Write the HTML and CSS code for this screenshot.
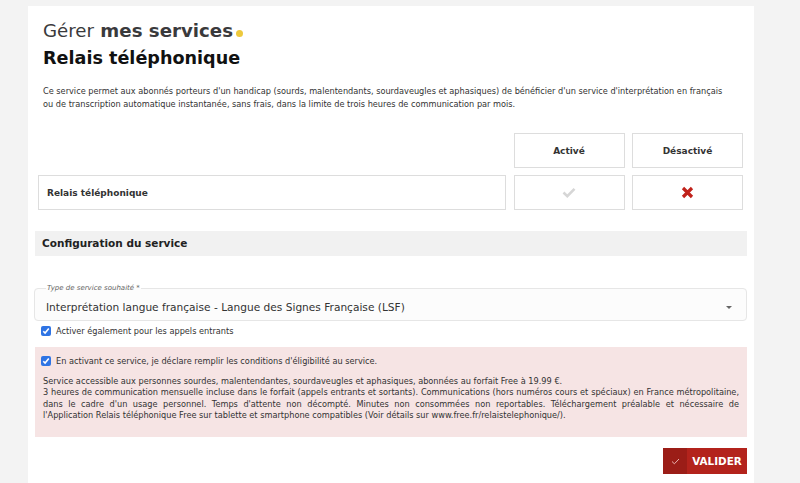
FILE: index.html
```html
<!DOCTYPE html>
<html lang="fr">
<head>
    <meta charset="UTF-8">
    <meta name="viewport" content="width=device-width, initial-scale=1.0">
    <title>Gérer mes services - Relais téléphonique</title>
    <link rel="stylesheet" href="styles.css">
</head>
<body>
    <div class="card">
        <h1 class="page-title"><span class="light">Gérer</span> mes services<span class="dot"></span></h1>
        <h2 class="service-title">Relais téléphonique</h2>
        <p class="intro">Ce service permet aux abonnés porteurs d'un handicap (sourds, malentendants, sourdaveugles et aphasiques) de bénéficier d'un service d'interprétation en français ou de transcription automatique instantanée, sans frais, dans la limite de trois heures de communication par mois.</p>

        <div class="status-grid">
            <div></div>
            <div class="cell head">Activé</div>
            <div class="cell head">Désactivé</div>
            <div class="cell name">Relais téléphonique</div>
            <div class="cell">
                <svg width="14" height="11" viewBox="0 0 14 11"><path d="M1.5 5.5l3.8 3.6L12.5 1.8" fill="none" stroke="#d6d6d6" stroke-width="2.6"/></svg>
            </div>
            <div class="cell">
                <svg width="13" height="13" viewBox="0 0 13 13"><path d="M2 2l9 9M11 2l-9 9" stroke="#c0221b" stroke-width="3.2"/></svg>
            </div>
        </div>

        <div class="section-head">Configuration du service</div>

        <fieldset class="field">
            <legend>Type de service souhaité *</legend>
            <div class="select-value">
                <span>Interprétation langue française - Langue des Signes Française (LSF)</span>
                <span class="caret"></span>
            </div>
        </fieldset>

        <label class="check">
            <span class="box"><svg width="8" height="8" viewBox="0 0 8 8"><path d="M1.3 4.2l1.8 1.9L6.8 1.6" fill="none" stroke="#fff" stroke-width="1.6"/></svg></span>
            Activer également pour les appels entrants
        </label>

        <div class="notice">
            <label class="check">
                <span class="box"><svg width="8" height="8" viewBox="0 0 8 8"><path d="M1.3 4.2l1.8 1.9L6.8 1.6" fill="none" stroke="#fff" stroke-width="1.6"/></svg></span>
                En activant ce service, je déclare remplir les conditions d'éligibilité au service.
            </label>
            <p class="notice-text">Service accessible aux personnes sourdes, malentendantes, sourdaveugles et aphasiques, abonnées au forfait Free à 19.99 €.<br>3 heures de communication mensuelle incluse dans le forfait (appels entrants et sortants). Communications (hors numéros cours et spéciaux) en France métropolitaine, dans le cadre d'un usage personnel. Temps d'attente non décompté. Minutes non consommées non reportables. Téléchargement préalable et nécessaire de l'Application&nbsp;Relais téléphonique Free sur tablette et smartphone compatibles (Voir détails sur www.free.fr/relaistelephonique/).</p>
        </div>

        <div class="actions">
            <button type="button" class="submit-btn">
                <span class="btn-icon"><svg width="9" height="7" viewBox="0 0 9 7"><path d="M1 3.5l2.4 2.3L8 1" fill="none" stroke="#e9b3b0" stroke-width="1"/></svg></span>
                <span class="btn-label">VALIDER</span>
            </button>
        </div>
    </div>
</body>
</html>
```

FILE: styles.css
```css
body {
    margin: 0;
    background-color: #f3f3f3;
    font-family: "DejaVu Sans", "Open Sans", sans-serif;
    color: #333333;
}

.card {
    background-color: #ffffff;
    margin: 6px 0 0 28px;
    width: 726px;
    min-height: 477px;
    padding: 12px 7px 0 7px;
    box-sizing: border-box;
}

.page-title {
    margin: 0 0 0 8px;
    font-size: 18.2px;
    font-weight: 700;
    color: #3a3a3c;
    line-height: 26px;
}

.page-title .light {
    font-weight: 500;
}

.dot {
    display: inline-block;
    width: 7px;
    height: 7px;
    border-radius: 50%;
    background-color: #edc93d;
    margin-left: 3px;
}

.service-title {
    margin: 1px 0 0 8px;
    font-size: 17.6px;
    font-weight: 700;
    color: #111111;
    line-height: 26px;
}

.intro {
    margin: 14px 0 0 8px;
    width: 690px;
    font-size: 8.2px;
    line-height: 13px;
    color: #333333;
}

/* Tableau activé / désactivé */
.status-grid {
    display: grid;
    grid-template-columns: 468px 111px 111px;
    grid-template-rows: 35px 35px;
    column-gap: 7.5px;
    row-gap: 7px;
    margin: 22px 0 0 3px;
}

.cell {
    border: 1px solid #dddddd;
    display: flex;
    align-items: center;
    justify-content: center;
    font-size: 9px;
    font-weight: 700;
    color: #333333;
}

.cell.name {
    justify-content: flex-start;
    padding-left: 8px;
}

.section-head {
    margin-top: 21px;
    background-color: #f1f1f1;
    height: 25px;
    line-height: 25px;
    padding-left: 7px;
    font-size: 10.5px;
    font-weight: 700;
    color: #222222;
}

/* Champ select */
.field {
    margin: 28px 0 0 -1px;
    padding: 0 12px 0 11px;
    border: 1px solid #e6e6e6;
    border-radius: 4px;
    background-color: #fcfcfc;
    height: 37px;
    box-sizing: border-box;
}

.field legend {
    padding: 0 1px;
    font-size: 7px;
    font-style: italic;
    color: #666666;
    line-height: 8px;
}

.select-value {
    display: flex;
    justify-content: space-between;
    align-items: center;
    font-size: 10.6px;
    color: #333333;
    margin-top: 9px;
}

.caret {
    width: 0;
    height: 0;
    border-left: 3px solid transparent;
    border-right: 3px solid transparent;
    border-top: 3px solid #666666;
    margin-right: 2px;
}

.check {
    display: flex;
    align-items: center;
    gap: 5px;
    font-size: 8.2px;
    color: #333333;
    margin: 5px 0 0 6px;
}

.box {
    width: 10px;
    height: 10px;
    border-radius: 2px;
    background-color: #2f74e4;
    display: flex;
    align-items: center;
    justify-content: center;
}

/* Bloc d'éligibilité */
.notice {
    margin-top: 11px;
    background-color: #f6e4e4;
    padding: 9px 8px 16px 8px;
}

.notice .check {
    margin: 0 0 0 -2px;
}

.notice-text {
    margin: 10px 0 0 0;
    font-size: 8.2px;
    line-height: 11.3px;
    text-align: justify;
    color: #333333;
}

.actions {
    display: flex;
    justify-content: flex-end;
    margin-top: 11px;
}

.submit-btn {
    display: flex;
    padding: 0;
    border: none;
    height: 26px;
    width: 84px;
    background-color: #b3231c;
    cursor: pointer;
    font-family: inherit;
}

.btn-icon {
    width: 24px;
    height: 100%;
    background-color: #9b1d17;
    display: flex;
    align-items: center;
    justify-content: center;
}

.btn-label {
    flex: 1;
    line-height: 26px;
    color: #ffffff;
    font-size: 10.4px;
    font-weight: 700;
    text-align: center;
}
```
